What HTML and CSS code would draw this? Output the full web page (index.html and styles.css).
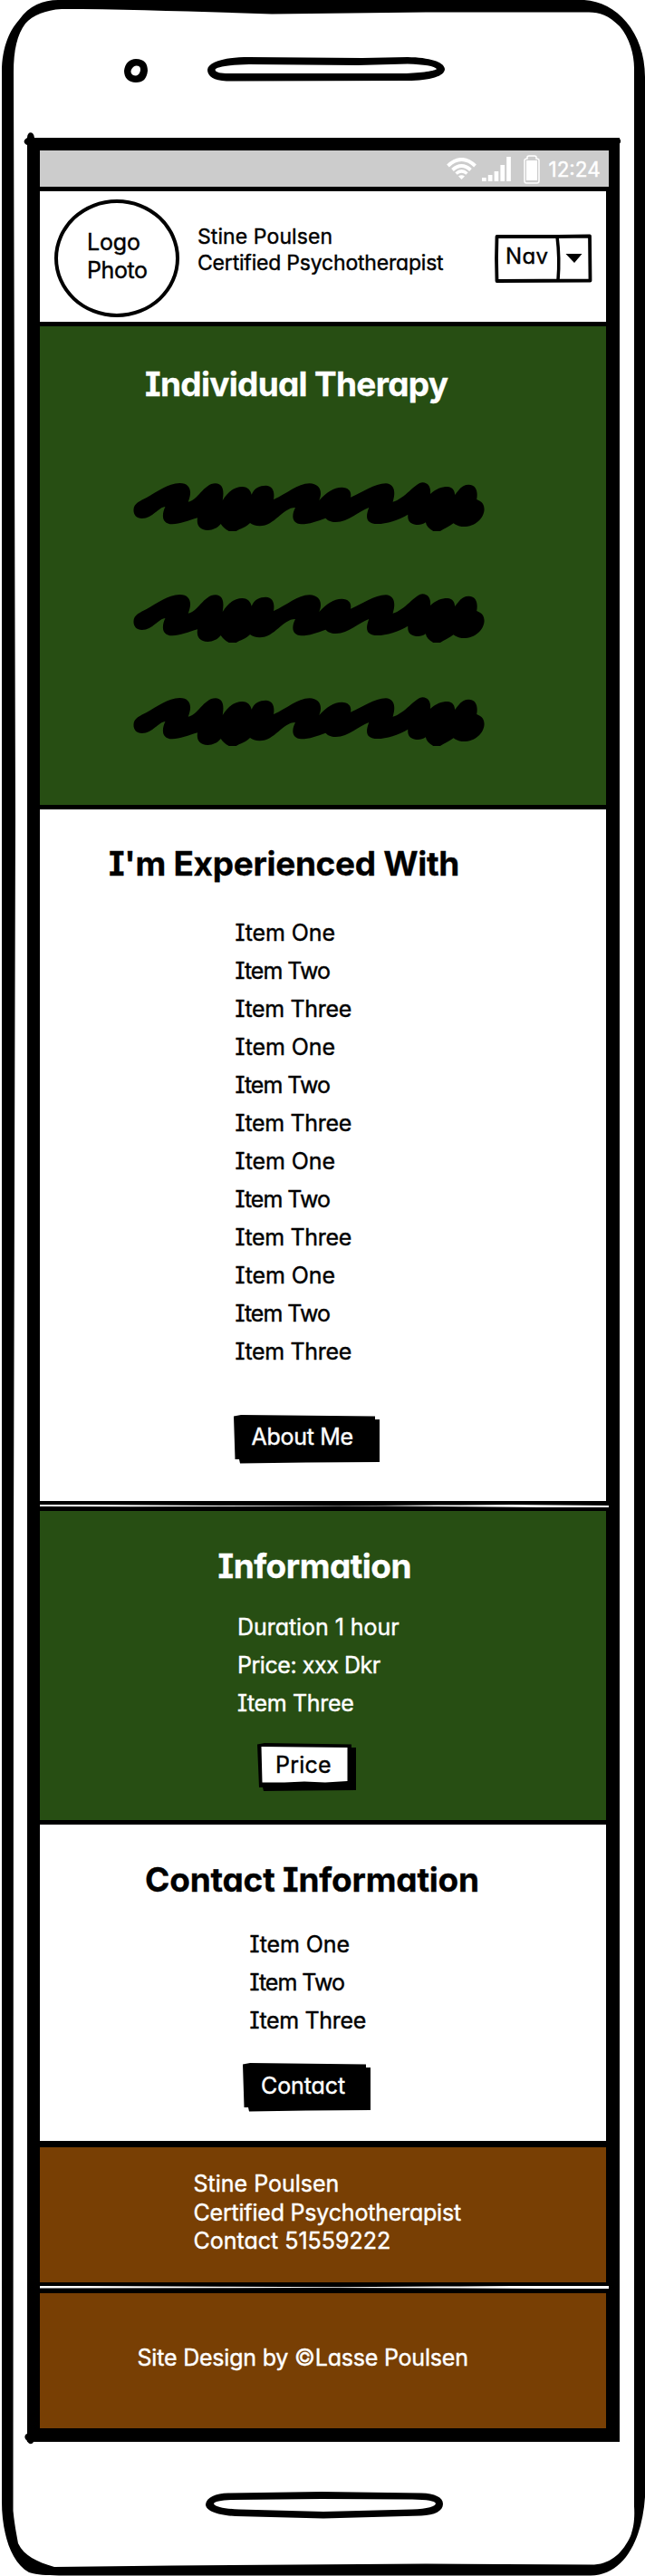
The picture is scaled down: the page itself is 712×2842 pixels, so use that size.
FILE: index.html
```
<!DOCTYPE html>
<html lang="en">
<head>
<meta charset="utf-8">
<title>Stine Poulsen – Certified Psychotherapist</title>
<link rel="stylesheet" href="styles.css">
</head>
<body>
<svg class="defs" width="0" height="0" aria-hidden="true">
  <symbol id="scribble" viewBox="0 0 1260 390"><path d="M52,188C52,165 75,158 95,147C130,128 165,100 205,99C235,99 243,120 239,140C237,150 235,155 233,161C262,160 285,100 323,100C350,102 352,125 347,156C365,125 390,111 412,111C432,111 440,125 443,137C452,115 470,107 490,107C515,108 520,130 516,153C560,135 595,100 635,100C668,101 680,125 667,156C690,130 715,113 742,113C768,114 775,130 771,146C810,130 850,100 888,100C915,102 922,125 911,161C950,153 985,97 1010,97C1030,98 1038,115 1035,135C1055,118 1072,111 1092,111C1110,112 1116,125 1117,138C1132,120 1140,104 1162,104C1190,105 1193,130 1189,153C1208,160 1215,172 1214,188C1212,215 1185,243 1145,243C1130,243 1120,238 1112,232C1098,243 1080,250 1068,258L1045,258C1030,250 1022,240 1020,229C1005,240 985,240 970,230C960,222 961,212 961,203C930,222 890,234 860,234C825,234 818,215 832,180C800,190 765,228 722,228C705,228 695,222 688,215C660,225 635,235 608,235C575,233 575,205 588,180C545,180 520,241 470,241C455,241 445,236 438,231C425,245 405,250 392,258L368,258C355,252 347,243 341,234C330,248 315,254 298,255C268,255 260,235 264,214C235,222 205,235 180,235C145,234 144,205 157,177C135,178 115,216 80,216C62,215 52,205 52,188Z"/></symbol>
</svg>
<main class="phone">
  <svg class="bezel" viewBox="0 0 712 2842" aria-hidden="true">
    <path fill-rule="evenodd" d="M64,0L645,0C680,2 712,35 712,85L712,2755C709,2800 690,2841 652,2841.5L65,2841.5C50,2841 42,2841 32,2838C10,2826 2,2790 2,2760L2,80C2,50 12,32 21,22C32,6 48,0 64,0ZM68,10C50,11 36,17 28,26C19,38 15,55 15,80L17,900L15,1700L14.500,2770C16,2785 18,2795 20,2806C27,2820 40,2826 60,2832L190,2830.500L470,2828.500L656,2829.500C676,2828 688,2815 696,2798C699,2790 701,2780 700,2765L700,75C700,60 695,42 684,29C672,17 662,13.500 650,13.500L470,13.500L300,15.500C220,13 140,10 68,10Z"/>
    <path fill-rule="evenodd" d="M150,65C159,65 163,70 163,78C162,87 158,91 150,91C142,91 137,86 137,78C138,70 143,65 150,65ZM150.500,72.500C147,73 144.500,76 144.500,79.500C145,82 147,83.500 150,83.500C153,83 155,80 155,76.500C155,74 153.500,72.500 150.500,72.500Z"/>
    <path fill-rule="evenodd" d="M275,63L400,64L450,63C474,63.500 490,68 491,76C491,84 475,89 450,89L250,89.500C236,89 229,84 229,77C230,68 248,63 275,63ZM275,71C252,71.500 238,74 237.500,77C238,80 244,81 252,81L445,81C466,80.500 481,78 482,76C480,73 468,71 450,70.500L395,72Z"/>
    <path fill-rule="evenodd" d="M252,2750.500L355,2749L465,2750.500C480,2751 489,2755 489,2762.500C489,2770 480,2775 465,2775.500L357,2778.500L260,2776C240,2775 227,2770 227,2763C228,2755 238,2751 252,2750.500ZM255,2758C244,2758.500 236,2760 236,2762.500C238,2766 250,2768 264,2768.500L357,2771L455,2768.500C472,2768 481,2765 481,2762C480,2759 472,2758 455,2757.500L355,2757Z"/>
    <path d="M30,152C30,145 37,144 38,152L682,152C686,153 686,158 683,159L683,170L30,170L30,160C25,158 26,154 30,152ZM30,2680L50,2680L50,2694L37,2694C35,2698 31,2696 30,2693C26,2690 27,2686 30,2685Z"/>
  </svg>

  <div class="screen">
    <div class="status">
      <svg class="wifi" viewBox="0 0 33 24" fill="none" stroke="#fff" stroke-width="4"><path d="M1.500,9Q16.500,-5 31.500,9"/><path d="M6.500,13.500Q16.500,4.500 26.500,13.500"/><path d="M10.500,17.500Q16.500,12.200 22.500,17.500" stroke-width="3.500"/><path d="M13,20.500Q16.500,18 20,20.500L16.500,24Z" fill="#fff" stroke="none"/></svg>
      <svg class="signal" viewBox="0 0 32 28" fill="#fff"><path d="M0,24h4.700v4H0zM6.800,21h4.700v7H6.800zM13.600,17h4.700v11h-4.700zM20.400,10h4.700v18h-4.700zM27.200,1h4.700v27h-4.700z"/></svg>
      <svg class="battery" viewBox="0 0 18 32"><path d="M4,4V2.500Q4,1 6,1H12Q14,1 14,2.500V4Q17,4 17,6V28.500Q17,31 15,31H3Q1,31 1,28.500V6Q1,4 4,4Z" fill="none" stroke="#fff" stroke-width="1.500"/><path d="M3,6H15V28H3Z" fill="#fff"/></svg>
      <span class="clock">12:24</span>
    </div>

    <header class="header">
      <div class="logo"><span>Logo</span><span class="logo-photo">Photo</span></div>
      <div class="brand"><div>Stine Poulsen</div><div class="brand-role">Certified Psychotherapist</div></div>
      <div class="nav">
        <span>Nav</span>
        <svg class="nav-art" viewBox="0 0 108 54" aria-hidden="true"><path d="M2.500,3L70,3L105,2.500L105.500,51.500L2.500,52L2,27Z" fill="none" stroke="#000" stroke-width="3.800" stroke-linejoin="round"/><path d="M69,3Q72,27 70,51" fill="none" stroke="#000" stroke-width="3.500"/><path d="M78.500,22L96.500,22L88,32Z"/></svg>
      </div>
    </header>

    <section class="hero">
      <h1 class="title title-therapy">Individual Therapy</h1>
      <div class="scribbles">
        <svg viewBox="51 96 1164 163"><use href="#scribble" width="1260" height="390"/></svg>
        <svg viewBox="51 96 1164 163"><use href="#scribble" width="1260" height="390"/></svg>
        <svg viewBox="51 96 1164 163"><use href="#scribble" width="1260" height="390"/></svg>
      </div>
    </section>

    <section class="experience">
      <h2 class="title title-experience">I'm Experienced With</h2>
      <ul class="list">
        <li class="one">Item One</li><li class="two">Item Two</li><li>Item Three</li>
        <li class="one">Item One</li><li class="two">Item Two</li><li>Item Three</li>
        <li class="one">Item One</li><li class="two">Item Two</li><li>Item Three</li>
        <li class="one">Item One</li><li class="two">Item Two</li><li>Item Three</li>
      </ul>
      <div class="btn btn-about">
        <svg viewBox="0 0 161 54" preserveAspectRatio="none" aria-hidden="true"><path d="M0,1.500L8,0L156,1.500V5H161V52L80,52.500L7,53.500L6,49H1.500Z"/></svg>
        <span>About Me</span>
      </div>
    </section>

    <svg class="slit" viewBox="0 0 628 3" preserveAspectRatio="none" aria-hidden="true"><path d="M0,0L50,0L200,1L330,1.300L440,.6L520,0L628,1V0H0ZM0,3V2L100,2.300L300,1.800L380,1.500L470,2.200L550,3Z"/></svg>

    <section class="info">
      <h2 class="title title-info">Information</h2>
      <ul class="list">
        <li class="duration">Duration 1 hour</li><li class="price">Price: xxx Dkr</li><li>Item Three</li>
      </ul>
      <div class="btn btn-price">
        <svg viewBox="0 0 109 53" preserveAspectRatio="none" aria-hidden="true"><path d="M0,1.500L8,0L104,1.500V5H109V52L50,52.500L7,53L6,49H2Z"/><path fill="#fff" d="M4.500,4L99.500,5V42L75,43.500L52,42.500L30,43.500H5.500Z"/></svg>
        <span>Price</span>
      </div>
    </section>

    <section class="contact">
      <h2 class="title title-contact">Contact Information</h2>
      <ul class="list">
        <li class="one">Item One</li><li class="two">Item Two</li><li>Item Three</li>
      </ul>
      <div class="btn btn-contact">
        <svg viewBox="0 0 141 54" preserveAspectRatio="none" aria-hidden="true"><path d="M0,1.500L8,0L136,1.500V5H141V52L70,52.500L7,53.500L6,49H1.500Z"/></svg>
        <span>Contact</span>
      </div>
    </section>

    <footer>
      <div class="address">
        <div>Stine Poulsen</div><div class="role">Certified Psychotherapist</div><div>Contact 51559222</div>
      </div>
      <svg class="slit" viewBox="0 0 628 3" preserveAspectRatio="none" aria-hidden="true"><path d="M0,0L50,0L200,.8L330,1.200L440,.6L520,0ZM0,3V2.600L200,2.300L300,2L400,2.200L550,3Z"/></svg>
      <div class="credit">Site Design by ©Lasse Poulsen</div>
    </footer>
  </div>
</main>
</body>
</html>
```
FILE: styles.css
```
* { box-sizing: border-box; }
body {
  margin: 0;
  background: #fff;
  color: #000;
  font: 400 25px/42px Inter, "Open Sans", sans-serif;
  font-feature-settings: "cv08", "cv11";
  -webkit-text-stroke: .4px currentColor;
  white-space: nowrap;
}
h1, h2, ul { margin: 0; padding: 0; }
ul { list-style: none; }
.defs { position: absolute; }
.phone { position: relative; width: 712px; height: 2842px; padding-top: 152px; overflow: hidden; }
.bezel { position: absolute; inset: 0; width: 712px; height: 2842px; }

.screen {
  position: relative;
  width: 654px;
  margin-left: 30px;
  border: solid #000;
  border-width: 14px 15px 15px 14px;
}

/* Phone status bar */
.status {
  display: flex;
  width: 628px;
  height: 40px;
  padding-left: 448.5px;
  background: #ccc;
  color: #fff;
}
.wifi { width: 33px; height: 24px; margin-top: 8px; }
.signal { width: 32px; height: 28px; margin: 6px 0 0 6.5px; }
.battery { width: 18px; height: 32px; margin: 5px 0 0 13.5px; }
.clock { margin: 0 0 0 10px; font-size: 22.5px; line-height: 42px; }

/* Header */
.header {
  display: flex;
  height: 154px;
  padding-left: 16px;
  border: solid #000;
  border-width: 5px 0;
}
.logo {
  display: flex;
  flex-direction: column;
  width: 138px;
  height: 130px;
  margin-top: 9px;
  padding: 27.5px 0 0 32px;
  border: 4px solid #000;
  border-radius: 50%;
  line-height: 31.5px;
  letter-spacing: -.15px;
}
.logo-photo { letter-spacing: -.4px; }
.brand { margin: 36px 0 0 20px; font-size: 23px; line-height: 29px; letter-spacing: .09px; }
.brand-role { letter-spacing: -.2px; }
.nav {
  position: relative;
  width: 108px;
  height: 54px;
  margin: 47px 0 0 auto;
  margin-right: 15px;
  padding-left: 12px;
  font-size: 24px;
  line-height: 49px;
  letter-spacing: .3px;
}
.nav-art { position: absolute; inset: 0; width: 108px; height: 54px; }

/* Sections */
.title { font-size: 37px; font-weight: 700; line-height: 44px; -webkit-text-stroke: .3px currentColor; }
.hero { height: 533px; padding-top: 41.5px; border-bottom: 5px solid #000; background: #274e13; color: #fff; }
.title-therapy { margin-left: 116px; letter-spacing: -.7px; }
.scribbles { display: grid; margin: 86px 0 0 103px; }
.scribbles svg { width: 388px; height: 54.3px; }
.scribbles svg:nth-child(2) { margin-top: 69.7px; }
.scribbles svg:nth-child(3) { margin-top: 59.7px; }

.experience { height: 767px; padding-top: 38px; border-bottom: 4px solid #000; }
.title-experience { margin-left: 76px; letter-spacing: -.32px; }
.experience .list { margin: 33px 0 0 215.500px; }
.list { letter-spacing: -.35px; }
.list .one { letter-spacing: -.1px; }
.list .two { letter-spacing: -1px; }
.list .duration { letter-spacing: -.05px; }
.list .price { letter-spacing: -.45px; }

.btn { position: relative; color: #fff; }
.btn svg { position: absolute; inset: 0; width: 100%; height: 100%; }
.btn span { position: relative; }
.btn-about { width: 161px; height: 54px; margin: 49px 0 0 213.5px; padding-left: 20px; line-height: 48px; letter-spacing: -.3px; }

.slit { display: block; width: 628px; height: 3px; background: #fff; }

.info { height: 350px; padding-top: 38.5px; border: solid #000; border-width: 4px 0 5px; background: #274e13; color: #fff; }
.title-info { margin-left: 196.5px; letter-spacing: -.5px; }
.info .list { margin: 24.5px 0 0 218px; }
.btn-price { width: 109px; height: 53px; margin: 22.5px 0 0 239.5px; padding-left: 20.5px; color: #000; line-height: 49px; letter-spacing: .2px; }

.contact { height: 356px; padding-top: 38.5px; border-bottom: 7px solid #000; }
.title-contact { margin-left: 116px; letter-spacing: -.2px; }
.contact .list { margin: 28px 0 0 231.500px; }
.btn-contact { width: 141px; height: 54px; margin: 26.5px 0 0 223.5px; padding-left: 20.5px; line-height: 50px; letter-spacing: -.1px; }

/* Footer */
footer { color: #fff; }
.address { height: 153px; padding: 25px 0 0 169.5px; border-bottom: 4px solid #000; background: #783f04; line-height: 31.700px; }
.role { letter-spacing: -.2px; }
.credit { height: 154px; padding: 50px 0 0 107.5px; border-top: 5px solid #000; background: #783f04; line-height: 42px; letter-spacing: -.2px; }
```
